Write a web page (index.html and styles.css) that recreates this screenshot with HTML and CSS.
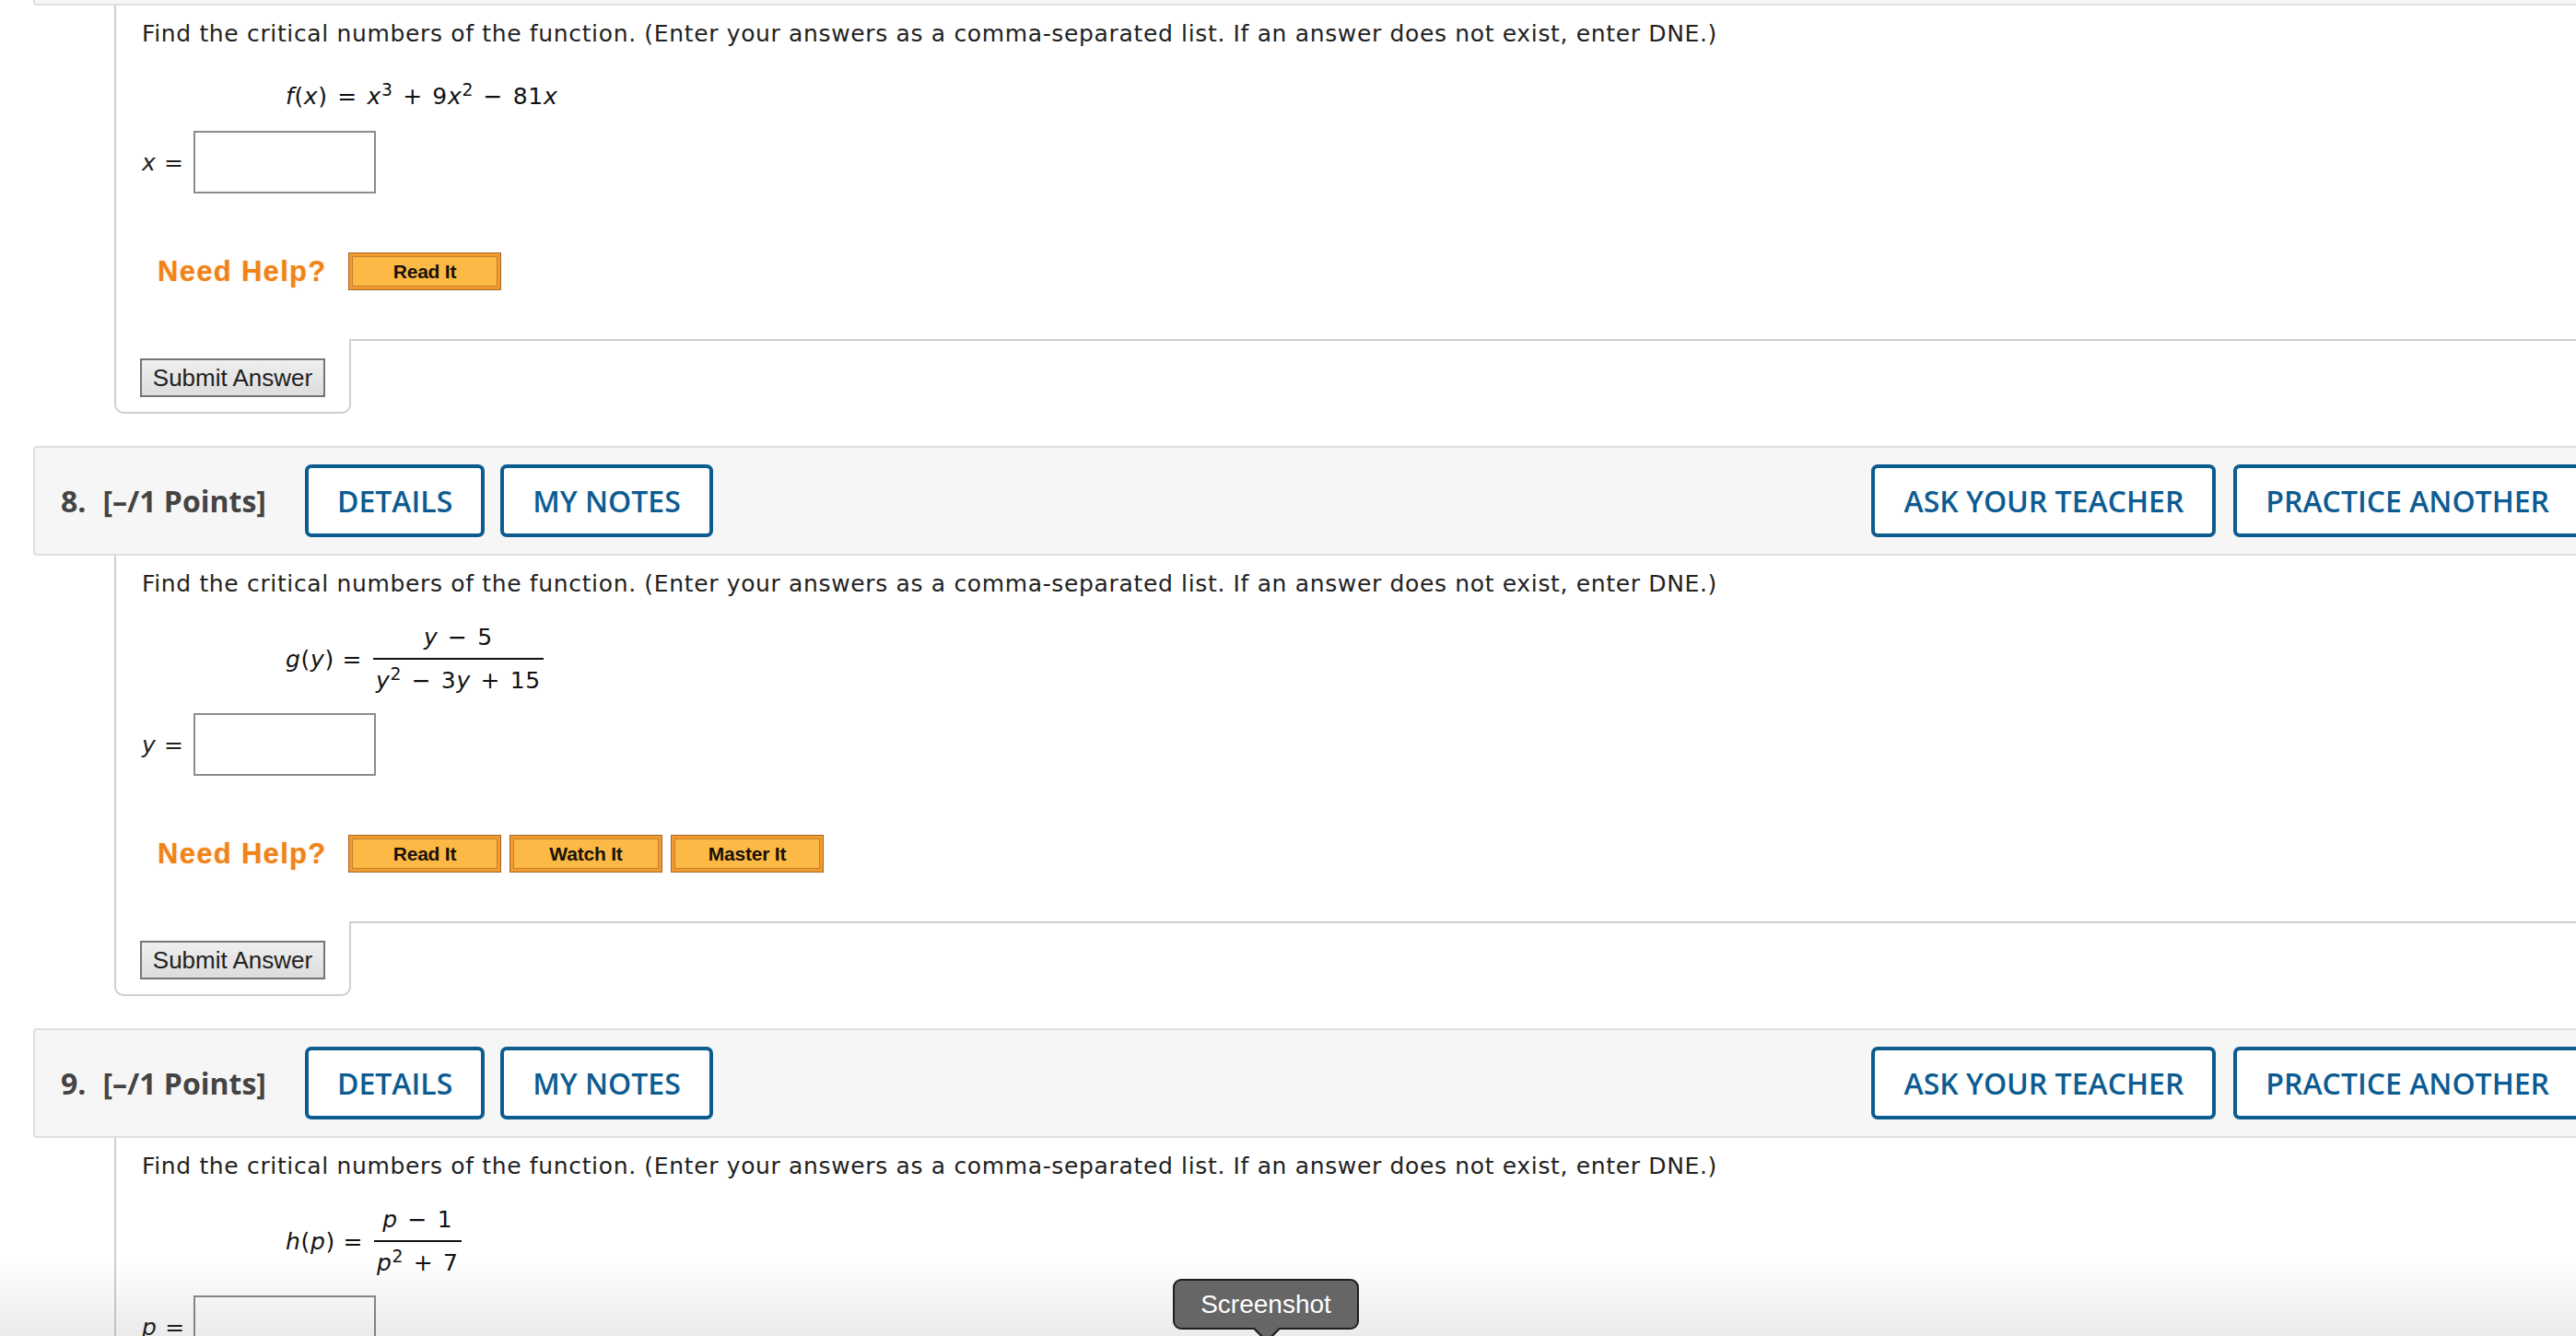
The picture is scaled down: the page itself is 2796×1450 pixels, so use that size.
FILE: index.html
```html
<!DOCTYPE html>
<html>
<head>
  <title>Assignment</title>
  <link rel="stylesheet" href="styles.css">
</head>
<body>

<div class="page">

  <section class="question">
    <!-- previous question: only the bottom edge of its header is on screen -->
    <div class="q-head"></div>
    <div class="q-body">
      <div class="q-content">
        <p class="prompt">Find the critical numbers of the function. (Enter your answers as a comma-separated list. If an answer does not exist, enter DNE.)</p>
        <div class="formula simple">
          <i>f</i>(<i>x</i>) = <i>x</i><sup>3</sup> + 9<i>x</i><sup>2</sup> − 81<i>x</i>
        </div>
        <div class="answer answer-simple">
          <span class="answer-label"><i>x</i> =</span>
          <input class="answer-box" type="text">
        </div>
        <div class="help-row">
          <span class="need-help">Need Help?</span>
          <button class="help-btn">Read It</button>
        </div>
      </div>
      <div class="q-foot">
        <div class="submit-cell"><button class="submit-btn">Submit Answer</button></div>
        <div class="feedback"></div>
      </div>
    </div>
  </section>

  <section class="question">
    <div class="q-head">
      <span class="q-num">8.</span>
      <span class="q-points">[–/1 Points]</span>
      <button class="head-btn">DETAILS</button>
      <button class="head-btn">MY NOTES</button>
      <div class="head-right">
        <button class="head-btn">ASK YOUR TEACHER</button>
        <button class="head-btn">PRACTICE ANOTHER</button>
      </div>
    </div>
    <div class="q-body">
      <div class="q-content">
        <p class="prompt">Find the critical numbers of the function. (Enter your answers as a comma-separated list. If an answer does not exist, enter DNE.)</p>
        <div class="formula">
          <span class="lhs"><i>g</i>(<i>y</i>) =</span>
          <span class="frac">
            <span class="num"><i>y</i> − 5</span>
            <span class="den"><i>y</i><sup>2</sup> − 3<i>y</i> + 15</span>
          </span>
        </div>
        <div class="answer">
          <span class="answer-label"><i>y</i> =</span>
          <input class="answer-box" type="text">
        </div>
        <div class="help-row">
          <span class="need-help">Need Help?</span>
          <button class="help-btn">Read It</button>
          <button class="help-btn">Watch It</button>
          <button class="help-btn">Master It</button>
        </div>
      </div>
      <div class="q-foot">
        <div class="submit-cell"><button class="submit-btn">Submit Answer</button></div>
        <div class="feedback"></div>
      </div>
    </div>
  </section>

  <section class="question">
    <div class="q-head">
      <span class="q-num">9.</span>
      <span class="q-points">[–/1 Points]</span>
      <button class="head-btn">DETAILS</button>
      <button class="head-btn">MY NOTES</button>
      <div class="head-right">
        <button class="head-btn">ASK YOUR TEACHER</button>
        <button class="head-btn">PRACTICE ANOTHER</button>
      </div>
    </div>
    <div class="q-body">
      <div class="q-content">
        <p class="prompt">Find the critical numbers of the function. (Enter your answers as a comma-separated list. If an answer does not exist, enter DNE.)</p>
        <div class="formula">
          <span class="lhs"><i>h</i>(<i>p</i>) =</span>
          <span class="frac">
            <span class="num"><i>p</i> − 1</span>
            <span class="den"><i>p</i><sup>2</sup> + 7</span>
          </span>
        </div>
        <div class="answer">
          <span class="answer-label"><i>p</i> =</span>
          <input class="answer-box" type="text">
        </div>
      </div>
    </div>
  </section>

</div>

<div class="dock-shade"></div>
<div class="tooltip">Screenshot</div>

</body>
</html>
```

FILE: styles.css
```css
body {
  margin: 0;
  background: #fff;
  overflow: hidden;
  font-family: "DejaVu Sans", Verdana, sans-serif;
  font-size: 25px;
  letter-spacing: 0.65px;
  color: #222;
}

.page {
  width: 2794px;
  margin: -113px 0 0 36px;
}

.question + .question {
  margin-top: 35px;
}

/* question header bar */
.q-head {
  display: flex;
  align-items: center;
  height: 119px;
  box-sizing: border-box;
  padding: 0 26px 0 28px;
  background: #f6f6f6;
  border: 2px solid #dedede;
  border-radius: 4px;
  font-family: "Open Sans", sans-serif;
  letter-spacing: 0;
}

.q-num, .q-points {
  font-size: 32px;
  font-weight: 700;
  color: #444;
}

.q-num {
  margin-right: 18px;
}

.q-points {
  margin-right: 42px;
}

.head-btn {
  height: 79px;
  padding: 0 31px;
  margin-right: 17px;
  background: #fff;
  border: 4px solid #0c5c8f;
  border-radius: 7px;
  font-family: "Open Sans", sans-serif;
  font-size: 32px;
  font-weight: 600;
  color: #0c5c92;
}

.head-right {
  margin-left: auto;
  display: flex;
}

.head-right .head-btn {
  margin: 0 0 0 19px;
}

/* question body */
.q-body {
  margin-left: 88px;
}

.q-content {
  border-left: 2px solid #cfcfcf;
  padding: 15px 0 53px 28px;
}

.prompt {
  margin: 0;
  line-height: 32px;
}

.formula {
  display: flex;
  align-items: center;
  margin: 26px 0 0 156px;
  line-height: 32px;
  color: #111;
}

.formula.simple {
  display: block;
  margin-top: 36px;
  word-spacing: 2px;
}

sup {
  font-size: 0.75em;
  line-height: 0;
  vertical-align: 0.5em;
}

.lhs {
  margin-right: 12px;
}

.frac {
  display: inline-flex;
  flex-direction: column;
  align-items: center;
  word-spacing: 2px;
}

.num {
  padding-bottom: 6px;
}

.den {
  border-top: 2px solid #111;
  padding: 7px 3px 0;
}

.answer {
  display: flex;
  align-items: center;
  margin-top: 19px;
}

.answer-simple {
  margin-top: 21px;
}

.answer-label {
  width: 56px;
}

.answer-box {
  width: 198px;
  height: 68px;
  box-sizing: border-box;
  margin: 0;
  border: 2px solid #8c8c8c;
  background: #fff;
}

.help-row {
  display: flex;
  align-items: center;
  margin-top: 64px;
  padding-left: 17px;
}

.need-help {
  width: 187px;
  margin-right: 20px;
  font-family: "Liberation Sans", Arial, sans-serif;
  font-size: 31px;
  font-weight: 700;
  line-height: 41px;
  letter-spacing: 1.3px;
  color: #f08318;
  text-shadow: 0 0 2px rgba(240, 131, 24, 0.4);
}

.help-btn {
  width: 166px;
  height: 41px;
  margin-right: 9px;
  padding: 0;
  background: #fdb945;
  border: 1px solid #a2652a;
  box-shadow: inset 0 0 0 3px #f39a2f, inset 0 0 0 4px #c2812f;
  font-family: "Liberation Sans", Arial, sans-serif;
  font-size: 21px;
  font-weight: 700;
  letter-spacing: -0.2px;
  color: #1a1208;
}

/* submit row */
.q-foot {
  display: flex;
  height: 81px;
}

.submit-cell {
  width: 257px;
  box-sizing: border-box;
  padding: 21px 26px 0;
  border: 2px solid #cfcfcf;
  border-top: none;
  border-radius: 0 0 10px 10px;
}

.submit-btn {
  width: 201px;
  height: 42px;
  padding: 0;
  background: linear-gradient(#efefef, #dcdcdc);
  border: 2px solid #757575;
  font-family: "Liberation Sans", Arial, sans-serif;
  font-size: 26px;
  color: #222;
}

.feedback {
  flex: 1;
  border-top: 2px solid #cfcfcf;
}

/* screen overlays */
.dock-shade {
  position: fixed;
  left: 0;
  right: 0;
  bottom: 0;
  height: 85px;
  background: linear-gradient(rgba(0, 0, 0, 0), rgba(0, 0, 0, 0.08));
  pointer-events: none;
}

.tooltip {
  position: fixed;
  left: 1273px;
  top: 1388px;
  width: 202px;
  height: 55px;
  box-sizing: border-box;
  background: #666;
  border: 2px solid #1e1e1e;
  border-radius: 9px;
  color: #fff;
  font-family: "Liberation Sans", Arial, sans-serif;
  font-size: 28px;
  letter-spacing: 0;
  line-height: 51px;
  text-align: center;
}

.tooltip::after {
  content: "";
  position: absolute;
  left: 90px;
  bottom: -12px;
  width: 18px;
  height: 18px;
  background: #666;
  border-right: 2px solid #1e1e1e;
  border-bottom: 2px solid #1e1e1e;
  transform: rotate(45deg);
}
```
